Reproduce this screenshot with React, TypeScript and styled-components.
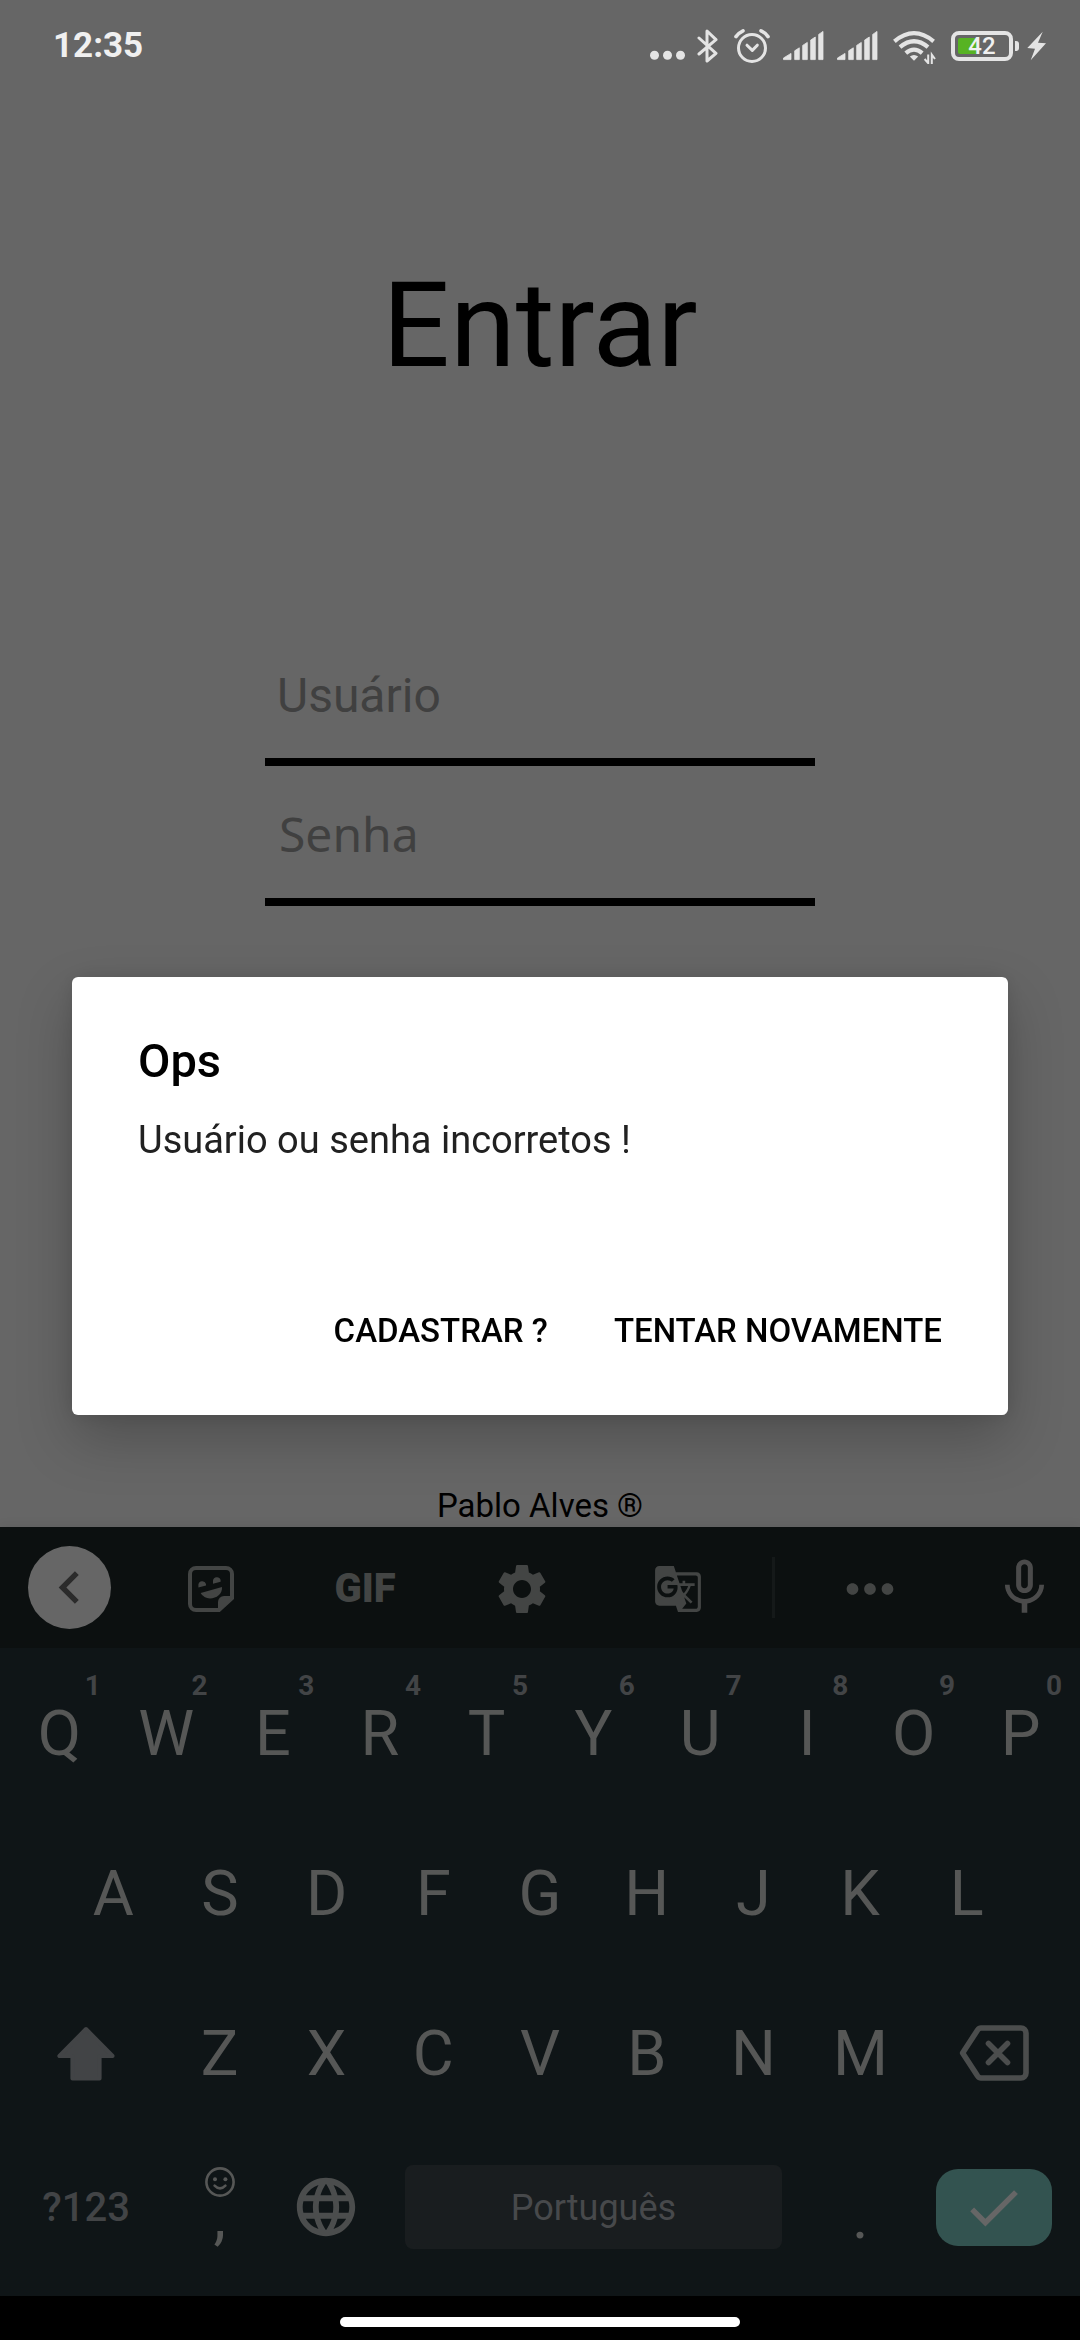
import React from "react";
import styled, { createGlobalStyle } from "styled-components";
import {
  MdCheck,
  MdChevronLeft,
  MdGTranslate,
  MdLanguage,
  MdMicNone,
  MdMoreHoriz,
  MdSettings,
} from "react-icons/md";

const GlobalStyle = createGlobalStyle`
  *, *::before, *::after { box-sizing: border-box; }
  body {
    margin: 0;
    background: #666666;
    font-family: Roboto, "Noto Sans", sans-serif;
  }
  button, input { font-family: inherit; margin: 0; }
  svg { display: block; flex: none; }
`;

const Screen = styled.div`
  display: flex;
  flex-direction: column;
  min-height: 100vh;
  background: #666666;
`;

/* Status bar */

const StatusBar = styled.header`
  display: flex;
  align-items: center;
  justify-content: space-between;
  height: 92px;
  padding: 0 34px 0 53px;
  color: #e4e4e4;
`;

const Clock = styled.time`
  font-size: 35px;
  line-height: 40px;
  font-weight: 700;
  color: #f0f0f0;
`;

const StatusIcons = styled.div`
  display: flex;
  align-items: center;
  gap: 12px;
`;

const Power = styled.div`
  display: flex;
  align-items: center;
  gap: 8px;
`;

const Battery = styled.div`
  display: flex;
  align-items: center;
  gap: 2px;

  &::after {
    content: "";
    width: 4px;
    height: 10px;
    border-radius: 0 3px 3px 0;
    background: currentColor;
  }
`;

const BatteryBody = styled.div`
  position: relative;
  width: 62px;
  height: 30px;
  padding: 3px;
  border: 4px solid currentColor;
  border-radius: 8px;
`;

const BatteryLevel = styled.div`
  height: 16px;
  border-radius: 2px;
  background: #57b323;
`;

const BatteryText = styled.span`
  position: absolute;
  inset: 0;
  font-size: 24px;
  line-height: 22px;
  font-weight: 500;
  text-align: center;
  color: #f0f0f0;
`;

/* Login page */

const Login = styled.main`
  flex: 1;
  display: flex;
  flex-direction: column;
  align-items: center;
  padding-top: 164px;
`;

const Title = styled.h1`
  margin: 0;
  font-size: 119px;
  line-height: 140px;
  font-weight: 400;
  color: #000;
`;

const Form = styled.form`
  display: flex;
  flex-direction: column;
  gap: 2px;
  width: 550px;
  max-width: 90%;
  margin-top: 232px;
`;

const Field = styled.input`
  width: 100%;
  height: 138px;
  padding: 4px 12px 0;
  border: 0;
  border-bottom: 8px solid #000;
  border-radius: 0;
  outline: 0;
  background: transparent;
  font-size: 48px;
  color: #000;

  &::placeholder {
    color: #404040;
    opacity: 1;
  }

  &[type="password"] {
    font-family: "Noto Sans", "Open Sans", sans-serif;
    padding: 0 14px;
  }
`;

const Credit = styled.footer`
  margin-top: auto;
  padding-bottom: 2px;
  font-size: 33px;
  line-height: 39px;
  color: #000;
`;

/* Dialog */

const Overlay = styled.div`
  position: fixed;
  inset: 0;
  display: flex;
  align-items: center;
  justify-content: center;
  padding: 52px 72px 0;
`;

const Dialog = styled.section`
  width: 100%;
  padding: 56px 44px 35px;
  border-radius: 6px;
  background: #fff;
  box-shadow: 0 24px 56px rgba(0, 0, 0, 0.22), 0 0 20px rgba(0, 0, 0, 0.1);
`;

const DialogTitle = styled.h2`
  margin: 0 22px 29px;
  font-size: 47px;
  line-height: 56px;
  font-weight: 500;
  color: #000;
`;

const DialogMessage = styled.p`
  margin: 0 22px 118px;
  font-size: 38px;
  line-height: 44px;
  color: #212121;
`;

const DialogActions = styled.div`
  display: flex;
  justify-content: flex-end;
  gap: 22px;
`;

const DialogButton = styled.button`
  height: 100px;
  padding: 0 22px;
  border: 0;
  background: transparent;
  font-size: 33px;
  font-weight: 500;
  text-transform: uppercase;
  color: #000;
`;

/* Keyboard */

const Keyboard = styled.section`
  background: #0f1517;
  box-shadow: 0 -2px 10px rgba(0, 0, 0, 0.06);
`;

const Toolbar = styled.div`
  display: grid;
  grid-template-columns: 139fr 144fr 164fr 150fr 162fr 28fr 165fr 128fr;
  align-items: center;
  height: 121px;
  background: #0c1010;
`;

const ToolButton = styled.button`
  display: flex;
  align-items: center;
  justify-content: center;
  width: 100%;
  height: 100%;
  padding: 2px 0 0;
  border: 0;
  background: transparent;
  font-size: 40px;
  font-weight: 900;
  color: #434544;
`;

const VoiceButton = styled(ToolButton)`
  padding: 0 0 0 16px;
  color: #4b4b4b;
`;

const BackButton = styled(ToolButton)`
  justify-self: center;
  width: 83px;
  height: 83px;
  padding: 0;
  border-radius: 50%;
  background: #666666;
  color: #2b2b2b;
`;

const Divider = styled.div`
  justify-self: center;
  width: 3px;
  height: 61px;
  background: #151919;
`;

const Keys = styled.div`
  padding: 5px 0 15px;
`;

const KeyRow = styled.div<{ $inset?: number; $height?: number }>`
  display: flex;
  height: ${(p) => p.$height ?? 160}px;
  padding: 0 ${(p) => p.$inset ?? 6}px;
`;

const Key = styled.button<{ $units?: number }>`
  position: relative;
  flex: ${(p) => p.$units ?? 2} 1 0;
  min-width: 0;
  display: flex;
  align-items: center;
  justify-content: center;
  padding: 0;
  border: 0;
  background: transparent;
  font-size: 63px;
  color: #565756;
`;

const Hint = styled.span`
  position: absolute;
  top: 17px;
  right: 12px;
  font-size: 28px;
  line-height: 32px;
  font-weight: 700;
  color: #424446;
`;

const ModeKey = styled(Key)`
  font-size: 40px;
  font-weight: 500;
  color: #424446;
`;

const ShiftKey = styled(Key)`
  color: #424446;
`;

const IconKey = styled(Key)`
  color: #4b4d4d;
`;

const PunctuationKey = styled(Key)`
  flex-direction: column;
  justify-content: flex-end;
  padding-bottom: 44px;
  line-height: 40px;
`;

const SpaceKey = styled(Key)`
  font-size: 36px;
  color: #47494b;

  & > span {
    flex: 1;
    margin: 0 25px;
    height: 84px;
    border-radius: 8px;
    background: #191d1f;
    line-height: 86px;
  }
`;

const EnterKey = styled(Key)`
  & > span {
    display: flex;
    align-items: center;
    justify-content: center;
    width: 116px;
    height: 77px;
    border-radius: 22px;
    background: #335350;
    color: #666666;
  }
`;

const NavBar = styled.div`
  display: flex;
  justify-content: center;
  height: 44px;
  padding-top: 21px;
  background: #000;
`;

const HomePill = styled.div`
  width: 37%;
  height: 10px;
  border-radius: 5px;
  background: #fff;
`;

/* Drawings */

const MoreDots = () => (
  <svg width="35" height="36" viewBox="0 0 35 36" fill="currentColor">
    <circle cx="4.5" cy="27.3" r="4.5" />
    <circle cx="17.5" cy="27.3" r="4.5" />
    <circle cx="30.5" cy="27.3" r="4.5" />
  </svg>
);

const Bluetooth = () => (
  <svg width="23" height="36" viewBox="0 0 23 36" fill="none" stroke="currentColor" strokeWidth="3" strokeLinecap="round" strokeLinejoin="round">
    <path d="M2 10 19 25.3 10 33V3L19 11.7 2 26" />
  </svg>
);

const Alarm = () => (
  <svg width="39" height="36" viewBox="0 0 39 36" fill="none" stroke="currentColor" strokeWidth="3" strokeLinecap="round" strokeLinejoin="round">
    <circle cx="20" cy="20" r="13.5" />
    <path d="M15 17.2 20.3 22.4 25.3 17.2" />
    <path d="M4 8.6Q7 4.6 11 2.8M29 2.8Q33 4.6 36 8.6" strokeWidth="3.6" />
  </svg>
);

const Signal = () => (
  <svg width="42" height="36" viewBox="0 0 42 36" fill="currentColor" stroke="currentColor" strokeWidth="0.8" strokeLinejoin="round">
    <path d="M0.5 31.6V30L8 25.4V31.6Z" />
    <path d="M11.7 31.6V22.8L16.3 19.8V31.6Z" />
    <path d="M19.7 31.6V17.4L24.3 14.4V31.6Z" />
    <path d="M27.7 31.6V12L32.3 9V31.6Z" />
    <path d="M35.7 31.6V6.4L40 3.4V31.6Z" />
  </svg>
);

const Wifi = () => (
  <svg width="48" height="36" viewBox="0 0 48 36" fill="none" stroke="currentColor" strokeWidth="4.2">
    <path d="M3.4 13.4Q23 -3 42.6 13.4" />
    <path d="M9 19.2Q23 7.4 37 19.2" />
    <path d="M14.8 25.2Q23 18 31.2 25.2" />
    <path d="M18.8 28.6Q23 25.6 27.2 28.6L23 32.8Z" fill="currentColor" stroke="none" />
    <path d="M33.6 31 37.2 35.2V26.4M44 31 40.8 26.6V36" strokeWidth="2" />
  </svg>
);

const Bolt = () => (
  <svg width="19" height="36" viewBox="0 0 19 36" fill="currentColor">
    <path d="M15.7 3.7 0.3 20 8 20.7 3.7 32.3 19 15.3 11 14.7Z" />
  </svg>
);

const Sticker = () => (
  <svg width="46" height="46" viewBox="0 0 46 46" fill="currentColor">
    <path d="M8 2H38A6 6 0 0 1 44 8V32L31 44H8A6 6 0 0 1 2 38V8A6 6 0 0 1 8 2Z" fill="none" stroke="currentColor" strokeWidth="4" />
    <path d="M30 43V36A6 6 0 0 1 36 30H45V33L32 45Z" />
    <path d="M10.4 21.6V18.6A3.9 3.9 0 0 1 18 18V19.6Z" />
    <path d="M25 17.8V14.6A3.9 3.9 0 0 1 32.6 14V15.8Z" />
    <path d="M12.7 27 34 21C34.5 28 28.5 32.4 22 32.4 18 32.4 14.5 30.2 12.7 27Z" />
  </svg>
);

const Shift = () => (
  <svg width="58" height="56" viewBox="0 0 58 56" fill="currentColor" stroke="currentColor" strokeWidth="4" strokeLinejoin="round">
    <path d="M29 4 2.4 31H15.4V53.5H42.6V31H55.6Z" />
  </svg>
);

const Backspace = () => (
  <svg width="70" height="56" viewBox="0 0 70 56" fill="none" stroke="currentColor" strokeWidth="5.6" strokeLinejoin="round">
    <path d="M22 3H62A5 5 0 0 1 67 8V48A5 5 0 0 1 62 53H22Q20 53 18.6 51L3.6 28 18.6 5Q20 3 22 3Z" />
    <path d="M29.5 18.5 48.5 37.5M48.5 18.5 29.5 37.5" strokeLinecap="round" />
  </svg>
);

const Smiley = () => (
  <svg width="30" height="30" viewBox="0 0 30 30" fill="none" stroke="currentColor" strokeWidth="2.6">
    <circle cx="15" cy="15" r="13.6" />
    <circle cx="10" cy="12.2" r="2" fill="currentColor" stroke="none" />
    <circle cx="20.4" cy="12.2" r="2" fill="currentColor" stroke="none" />
    <path d="M9.6 18.6Q15 24.2 20.4 18.6" strokeLinecap="round" />
  </svg>
);

const TOP_ROW = ["Q", "W", "E", "R", "T", "Y", "U", "I", "O", "P"];
const HOME_ROW = ["A", "S", "D", "F", "G", "H", "J", "K", "L"];
const BOTTOM_ROW = ["Z", "X", "C", "V", "B", "N", "M"];
const BATTERY_PERCENT = 42;

export default function App() {
  return (
    <>
      <GlobalStyle />
      <Screen>
        <StatusBar>
          <Clock>12:35</Clock>
          <StatusIcons>
            <MoreDots />
            <Bluetooth />
            <Alarm />
            <Signal />
            <Signal />
            <Wifi />
            <Power>
              <Battery>
                <BatteryBody>
                  <BatteryLevel style={{ width: `${BATTERY_PERCENT}%` }} />
                  <BatteryText>{BATTERY_PERCENT}</BatteryText>
                </BatteryBody>
              </Battery>
              <Bolt />
            </Power>
          </StatusIcons>
        </StatusBar>

        <Login>
          <Title>Entrar</Title>
          <Form onSubmit={(event) => event.preventDefault()}>
            <Field type="text" aria-label="Usuário" placeholder="Usuário" />
            <Field type="password" aria-label="Senha" placeholder="Senha" />
          </Form>
          <Credit>Pablo Alves ®</Credit>
        </Login>

        <Keyboard>
          <Toolbar>
            <BackButton type="button" aria-label="Voltar">
              <MdChevronLeft size={65} />
            </BackButton>
            <ToolButton type="button" aria-label="Figurinhas">
              <Sticker />
            </ToolButton>
            <ToolButton type="button">GIF</ToolButton>
            <ToolButton type="button" aria-label="Configurações">
              <MdSettings size={60} />
            </ToolButton>
            <ToolButton type="button" aria-label="Traduzir">
              <MdGTranslate size={50} />
            </ToolButton>
            <Divider />
            <ToolButton type="button" aria-label="Mais">
              <MdMoreHoriz size={70} />
            </ToolButton>
            <VoiceButton type="button" aria-label="Voz">
              <MdMicNone size={67} />
            </VoiceButton>
          </Toolbar>

          <Keys>
            <KeyRow>
              {TOP_ROW.map((letter, index) => (
                <Key key={letter} type="button">
                  {letter}
                  <Hint>{(index + 1) % 10}</Hint>
                </Key>
              ))}
            </KeyRow>
            <KeyRow $inset={60}>
              {HOME_ROW.map((letter) => (
                <Key key={letter} type="button">
                  {letter}
                </Key>
              ))}
            </KeyRow>
            <KeyRow>
              <ShiftKey type="button" $units={3} aria-label="Maiúsculas">
                <Shift />
              </ShiftKey>
              {BOTTOM_ROW.map((letter) => (
                <Key key={letter} type="button">
                  {letter}
                </Key>
              ))}
              <IconKey type="button" $units={3} aria-label="Apagar">
                <Backspace />
              </IconKey>
            </KeyRow>
            <KeyRow $height={148}>
              <ModeKey type="button" $units={3}>
                ?123
              </ModeKey>
              <PunctuationKey type="button">
                <Smiley />
                <span>,</span>
              </PunctuationKey>
              <IconKey type="button" aria-label="Idioma">
                <MdLanguage size={70} />
              </IconKey>
              <SpaceKey type="button" $units={8}>
                <span>Português</span>
              </SpaceKey>
              <PunctuationKey type="button">
                <span>.</span>
              </PunctuationKey>
              <EnterKey type="button" $units={3} aria-label="Concluir">
                <span>
                  <MdCheck size={65} />
                </span>
              </EnterKey>
            </KeyRow>
          </Keys>
          <NavBar>
            <HomePill />
          </NavBar>
        </Keyboard>
      </Screen>

      <Overlay>
        <Dialog role="alertdialog" aria-labelledby="dialog-title" aria-describedby="dialog-message">
          <DialogTitle id="dialog-title">Ops</DialogTitle>
          <DialogMessage id="dialog-message">Usuário ou senha incorretos !</DialogMessage>
          <DialogActions>
            <DialogButton type="button">Cadastrar ?</DialogButton>
            <DialogButton type="button">Tentar novamente</DialogButton>
          </DialogActions>
        </Dialog>
      </Overlay>
    </>
  );
}
